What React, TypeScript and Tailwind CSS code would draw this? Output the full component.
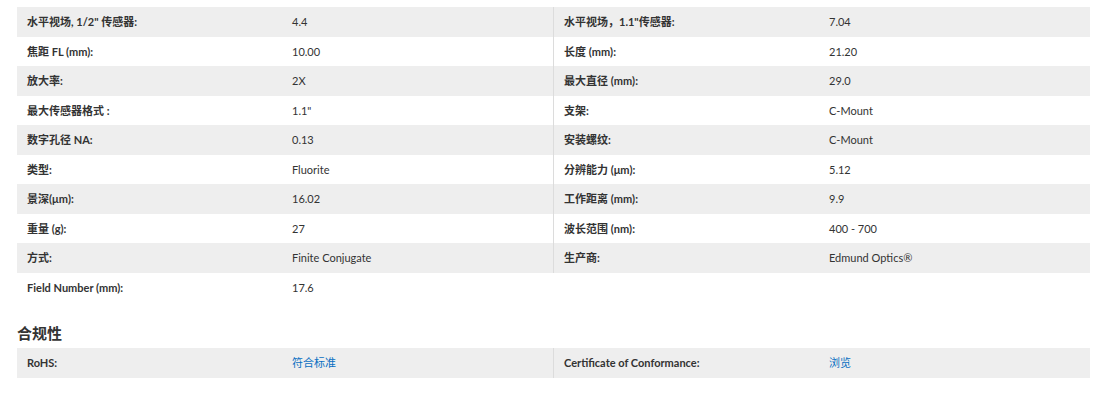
import React from "react";

type Row = [string, string];

const left: Row[] = [
  ["水平视场, 1/2\" 传感器:", "4.4"],
  ["焦距 FL (mm):", "10.00"],
  ["放大率:", "2X"],
  ["最大传感器格式 :", "1.1\""],
  ["数字孔径 NA:", "0.13"],
  ["类型:", "Fluorite"],
  ["景深(μm):", "16.02"],
  ["重量 (g):", "27"],
  ["方式:", "Finite Conjugate"],
  ["Field Number (mm):", "17.6"],
];

const right: Row[] = [
  ["水平视场，1.1\"传感器:", "7.04"],
  ["长度 (mm):", "21.20"],
  ["最大直径 (mm):", "29.0"],
  ["支架:", "C-Mount"],
  ["安装螺纹:", "C-Mount"],
  ["分辨能力 (μm):", "5.12"],
  ["工作距离 (mm):", "9.9"],
  ["波长范围 (nm):", "400 - 700"],
  ["生产商:", "Edmund Optics®"],
];

function Table({ rows, border, link }: { rows: Row[]; border?: boolean; link?: boolean }) {
  return (
    <div className={border ? "flex-1 flex flex-col border-l border-[#dcdcdc]" : "flex-1 flex flex-col"}>
      {rows.map(([k, v], i) => (
        <div
          key={i}
          className={
            "grid grid-cols-[275px_1fr] items-center h-[29.5px] " +
            (i % 2 === 0 ? "bg-[#eeeeee]" : "bg-white")
          }
        >
          <div className="pl-[10px] font-bold text-[#333333]">{k}</div>
          <div className={link ? "text-[#0a6fc2]" : "text-[#333333]"}>{v}</div>
        </div>
      ))}
    </div>
  );
}

export default function App() {
  return (
    <div
      className="w-[1094px] h-[399px] bg-white text-[11px] leading-none pl-[17px] pr-[4px] pt-[7px]"
      style={{ fontFamily: '"Lato", "Noto Sans CJK SC", sans-serif' }}
    >
      <div className="flex items-start">
        <Table rows={left} />
        <Table rows={right} border />
      </div>
      <div className="mt-[23px] mb-[6px] text-[15px] font-semibold text-[#333333] leading-[17px]">合规性</div>
      <div className="flex items-start">
        <div className="flex-1 grid grid-cols-[275px_1fr] items-center h-[29.5px] bg-[#eeeeee]">
          <div className="pl-[10px] font-bold text-[#333333]">RoHS:</div>
          <div className="text-[#0a6fc2]">符合标准</div>
        </div>
        <div className="flex-1 grid grid-cols-[275px_1fr] items-center h-[29.5px] bg-[#eeeeee] border-l border-[#dcdcdc]">
          <div className="pl-[10px] font-bold text-[#333333]">Certificate of Conformance:</div>
          <div className="text-[#0a6fc2]">浏览</div>
        </div>
      </div>
    </div>
  );
}
